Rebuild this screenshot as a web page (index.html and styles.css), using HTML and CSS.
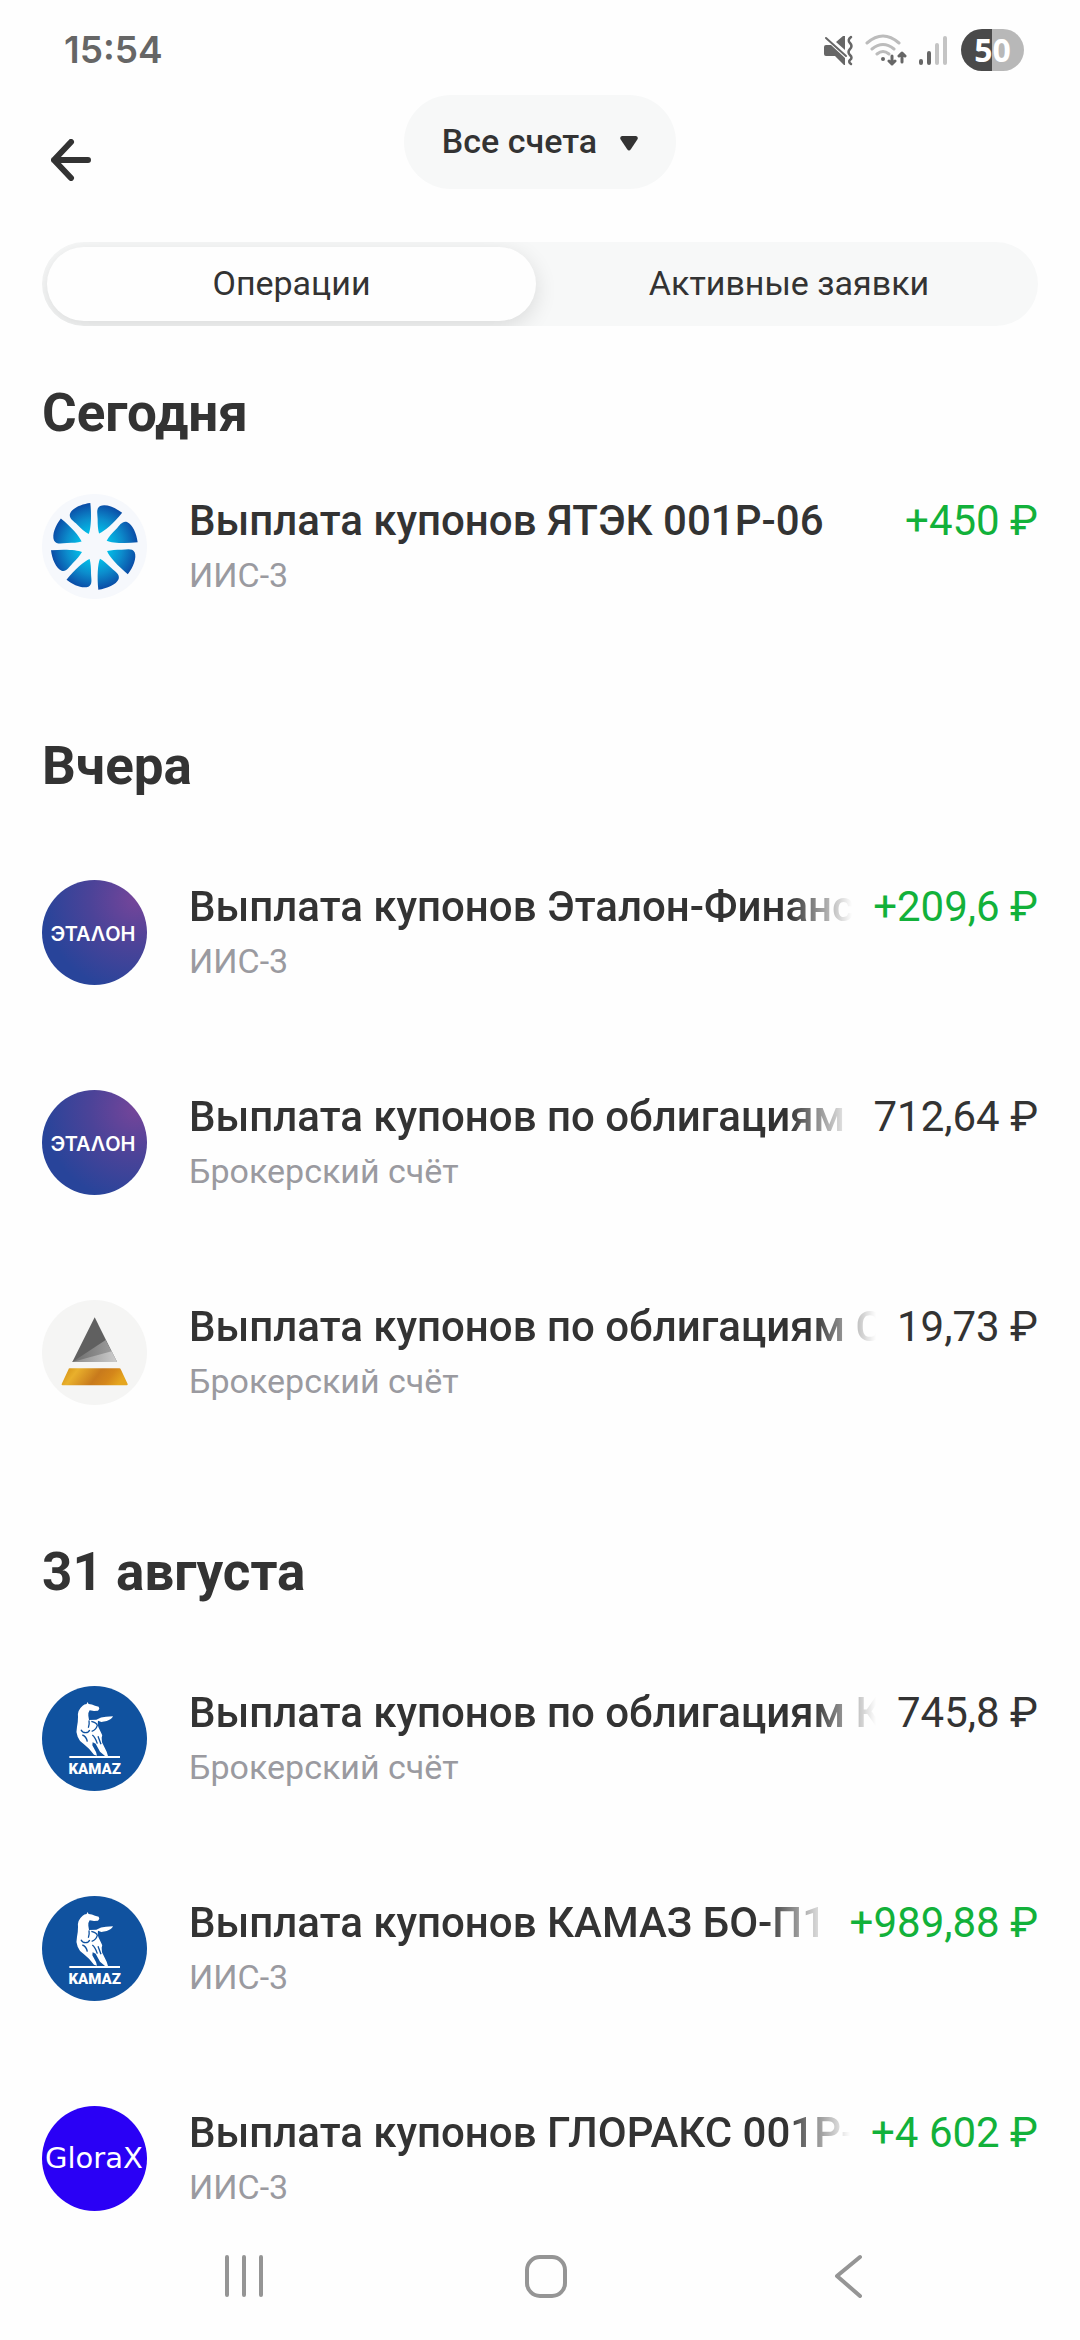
FILE: index.html
```html
<!DOCTYPE html>
<html lang="ru">
<head>
<meta charset="utf-8">
<meta name="viewport" content="width=device-width, initial-scale=1">
<title>Операции</title>
<link rel="stylesheet" href="styles.css">
</head>
<body>
<svg class="sprite" aria-hidden="true">
  <defs>
    <radialGradient id="blade" gradientUnits="userSpaceOnUse" cx="0" cy="0" r="130">
      <stop offset="0.3" stop-color="#00c2ea"/>
      <stop offset="0.65" stop-color="#0c8ccc"/>
      <stop offset="1" stop-color="#0a4ca6"/>
    </radialGradient>
    <radialGradient id="etalon-bg" cx="0.9" cy="0.18" r="0.9">
      <stop offset="0" stop-color="#75459a"/>
      <stop offset="0.5" stop-color="#4b4398"/>
      <stop offset="1" stop-color="#28449a"/>
    </radialGradient>
    <linearGradient id="gold" x1="0" y1="0" x2="1" y2="0.2">
      <stop offset="0" stop-color="#cf8a10"/>
      <stop offset="0.25" stop-color="#e9b02c"/>
      <stop offset="0.6" stop-color="#c87a1c"/>
      <stop offset="0.8" stop-color="#d4861a"/>
      <stop offset="1" stop-color="#e5a51e"/>
    </linearGradient>
    <linearGradient id="facet" x1="0" y1="0" x2="1" y2="0">
      <stop offset="0" stop-color="#6c6c6c"/>
      <stop offset="1" stop-color="#a2a2a2"/>
    </linearGradient>
    <linearGradient id="facet-light" x1="0" y1="0" x2="1" y2="0">
      <stop offset="0" stop-color="#8a8a8a"/>
      <stop offset="1" stop-color="#cccccc"/>
    </linearGradient>
    <path id="petal" d="M-12-130C-38-127-66-115-73-98C-77-84-64-77-51-65C-38-52-29-44-17-37C-10-52-8-92-12-130Z"/>
    <g id="horse">
      <path fill="#fff" d="M158 92q5-5 12-5l2-6 4 6q10 0 19 5l11 3 2 6-4 6-12 1-13-2q-5 7-4 16l2 13 22-1q14-9 29-9l21-1q-4 9-19 14l-16 3-10-4q-2 8 1 19l9 19q5 5 1 13l1 14 14 28 4 13-8 1-16-14-13-24-9-4-1 9 11 20 3 11-9-3-15-18-16-14q-13-8-18-22-6-16-2-30 3-14 3-29-3-20 14-34z"/>
      <path fill="none" stroke="#10529f" stroke-width="4" d="M177 136q2 12-2 22M184 139q16 4 18 12-4 14-17 18M153 164q4 9 14 9 9 0 12-8M157 180q12 4 15 20M187 180q9 7 15 26M204 184l9 24"/>
      <path stroke="#fff" stroke-width="6" d="M118 246h152"/>
    </g>
  </defs>
</svg>

<div class="screen">
  <div class="status">
    <time class="clock">15:54</time>
    <div class="indicators">
      <svg width="32" height="32" viewBox="820 34 32 32" role="img" aria-label="Вибрация">
        <g fill="#666"><path d="M825 45h5l14 13v7h-1l-9-9h-9q-2 0-2-2v-7q0-2 2-2zM835 42l7-6h2v14z"/></g>
        <path fill="none" stroke="#666" stroke-width="2" stroke-linecap="round" d="M825 38l20 18"/>
        <path fill="none" stroke="#666" stroke-width="2.500" stroke-linecap="round" stroke-linejoin="round" d="M850 37q-4 3-1 6 3 3 0 6-3 3 0 6 3 3 0 5-2 2 1 4"/>
      </svg>
      <svg width="42" height="32" viewBox="866 34 42 32" role="img" aria-label="Wi-Fi">
        <g fill="none" stroke="#bcbcbc" stroke-width="3" stroke-linecap="round"><path d="M868 43q16-14 32 0M873 49q11-9 22 0M878 54q6-5 12 0"/></g>
        <circle cx="884" cy="59" r="2" fill="#666"/>
        <path fill="none" stroke="#666" stroke-width="3" stroke-linecap="round" stroke-linejoin="round" d="M893 56v8m-3-3l3 3 3-3M903 62v-9m-3 3l3-3 3 3"/>
      </svg>
      <svg width="30" height="32" viewBox="917 34 30 32" role="img" aria-label="Сигнал сети">
        <g stroke-width="4" stroke-linecap="round"><path stroke="#666" d="M919 61v2M927 53v10"/><path stroke="#c4c4c4" d="M935 45v18M943 38v25"/></g>
      </svg>
      <div class="battery">50</div>
    </div>
  </div>

  <header class="topbar">
    <button class="back" type="button" aria-label="Назад">
      <svg width="40" height="42" viewBox="0 0 40 42"><path fill="none" stroke="#333" stroke-width="6" stroke-linecap="round" stroke-linejoin="round" d="M20 3L3 21l17 18M3 21h34"/></svg>
    </button>
    <button class="account" type="button">Все счета
      <svg class="caret" width="18" height="15" viewBox="0 0 18 15"><path fill="#333" d="M2 0h14q3 1 1 4l-6 9q-2 3-4 0L1 4q-2-3 1-4z"/></svg>
    </button>
  </header>

  <div class="tabs" role="tablist">
    <button class="tab tab-active" type="button" role="tab" aria-selected="true">Операции</button>
    <button class="tab" type="button" role="tab" aria-selected="false">Активные заявки</button>
  </div>

  <main class="feed">
    <section class="day day-first">
      <h2>Сегодня</h2>
      <ul>
        <li class="op">
          <svg class="logo" viewBox="36 42 315 315">
            <circle cx="193.500" cy="199.500" r="157.500" fill="#f6f8fc"/>
            <g transform="translate(193 199)" fill="url(#blade)">
              <use href="#petal"/>
              <use href="#petal" transform="rotate(45)"/>
              <use href="#petal" transform="rotate(90)"/>
              <use href="#petal" transform="rotate(135)"/>
              <use href="#petal" transform="rotate(180)"/>
              <use href="#petal" transform="rotate(225)"/>
              <use href="#petal" transform="rotate(270)"/>
              <use href="#petal" transform="rotate(315)"/>
            </g>
          </svg>
          <div class="info"><div class="title">Выплата купонов ЯТЭК 001P-06</div><div class="sub">ИИС-3</div></div>
          <div class="sum income">+450 ₽</div>
        </li>
      </ul>
    </section>
    <section class="day">
      <h2>Вчера</h2>
      <ul>
        <li class="op">
          <svg class="logo" viewBox="0 0 105 105">
            <circle cx="52.500" cy="52.500" r="52.500" fill="url(#etalon-bg)"/>
            <text class="etalon-word" x="51" y="61" text-anchor="middle">ЭТАΛОН</text>
          </svg>
          <div class="info"><div class="title fade">Выплата купонов Эталон-Финанс</div><div class="sub">ИИС-3</div></div>
          <div class="sum income">+209,6 ₽</div>
        </li>
        <li class="op">
          <svg class="logo" viewBox="0 0 105 105">
            <circle cx="52.500" cy="52.500" r="52.500" fill="url(#etalon-bg)"/>
            <text class="etalon-word" x="51" y="61" text-anchor="middle">ЭТАΛОН</text>
          </svg>
          <div class="info"><div class="title fade">Выплата купонов по облигациям</div><div class="sub">Брокерский счёт</div></div>
          <div class="sum">712,64 ₽</div>
        </li>
        <li class="op">
          <svg class="logo" viewBox="36 30 315 315">
            <circle cx="193.500" cy="187.500" r="157.500" fill="#f5f5f4"/>
            <path fill="#606060" d="M194 82l67 134H127z"/>
            <path fill="url(#facet)" d="M127 216l100-66 34 66z"/>
            <path fill="url(#facet-light)" d="M127 216l118-32 16 32z"/>
            <path fill="url(#gold)" d="M119 235h149q3 0 5 4l20 43q1 4-3 4H98q-4 0-3-4l20-43q1-4 4-4z"/>
          </svg>
          <div class="info"><div class="title fade">Выплата купонов по облигациям С</div><div class="sub">Брокерский счёт</div></div>
          <div class="sum">19,73 ₽</div>
        </li>
      </ul>
    </section>
    <section class="day">
      <h2>31 августа</h2>
      <ul>
        <li class="op">
          <svg class="logo" viewBox="36 33 315 315">
            <circle cx="193.500" cy="190.500" r="157.500" fill="#10529f"/>
            <use href="#horse"/>
            <text class="kamaz-word" x="194" y="298" text-anchor="middle">KAMAZ</text>
          </svg>
          <div class="info"><div class="title fade">Выплата купонов по облигациям К</div><div class="sub">Брокерский счёт</div></div>
          <div class="sum">745,8 ₽</div>
        </li>
        <li class="op">
          <svg class="logo" viewBox="36 33 315 315">
            <circle cx="193.500" cy="190.500" r="157.500" fill="#10529f"/>
            <use href="#horse"/>
            <text class="kamaz-word" x="194" y="298" text-anchor="middle">KAMAZ</text>
          </svg>
          <div class="info"><div class="title fade">Выплата купонов КАМАЗ БО-П1</div><div class="sub">ИИС-3</div></div>
          <div class="sum income">+989,88 ₽</div>
        </li>
        <li class="op">
          <svg class="logo" viewBox="0 0 105 105">
            <circle cx="52.500" cy="52.500" r="52.500" fill="#2a00f5"/>
            <text class="glorax-word" x="52" y="62" text-anchor="middle">GloraX</text>
          </svg>
          <div class="info"><div class="title fade">Выплата купонов ГЛОРАКС 001P-</div><div class="sub">ИИС-3</div></div>
          <div class="sum income">+4 602 ₽</div>
        </li>
      </ul>
    </section>
  </main>

  <nav class="sysnav">
    <button type="button" aria-label="Недавние">
      <svg width="44" height="44" viewBox="0 0 44 44"><path stroke="#959595" stroke-width="4" stroke-linecap="round" d="M5 3v38M22 3v38M39 3v38"/></svg>
    </button>
    <button type="button" aria-label="Домой">
      <svg width="44" height="44" viewBox="0 0 44 44"><rect x="3" y="3" width="38" height="39" rx="13" fill="none" stroke="#959595" stroke-width="4"/></svg>
    </button>
    <button type="button" aria-label="Назад">
      <svg width="44" height="44" viewBox="0 0 44 44"><path fill="none" stroke="#959595" stroke-width="4" stroke-linecap="round" stroke-linejoin="round" d="M34 3L11 22l23 20"/></svg>
    </button>
  </nav>
</div>
</body>
</html>
```
FILE: styles.css
```css
* {
  box-sizing: border-box;
}

body {
  margin: 0;
  background: #fefefe;
  color: #333;
  font-family: Roboto, "Noto Sans", sans-serif;
}

button {
  margin: 0;
  padding: 0;
  border: 0;
  background: none;
  color: inherit;
  font: inherit;
}

svg {
  display: block;
}

.sprite {
  position: absolute;
  width: 0;
  height: 0;
}

.screen {
  display: flex;
  flex-direction: column;
  min-height: 100vh;
}

.status {
  display: flex;
  justify-content: space-between;
  align-items: center;
  height: 95px;
  padding: 5px 56px 0 64px;
}

.clock {
  color: #666;
  font: 600 37px/48px Inter, sans-serif;
}

.indicators {
  display: flex;
  align-items: center;
  gap: 12px;
}

.battery {
  width: 63px;
  border-radius: 21px;
  background: linear-gradient(90deg, #4a4a4a 50%, #b8b8b8 50%);
  color: #fff;
  font: 700 32px/42px "Open Sans", sans-serif;
  text-align: center;
}

.topbar {
  display: grid;
  grid-template-columns: 1fr auto 1fr;
  height: 130px;
  padding: 0 42px;
}

.back {
  display: flex;
  align-self: center;
  justify-self: start;
  padding: 9px;
}

.account {
  display: flex;
  align-items: center;
  align-self: start;
  gap: 23px;
  height: 94px;
  padding: 0 38px 2px;
  border-radius: 47px;
  background: #f7f8f8;
  font-weight: 500;
  font-size: 34px;
}

.caret {
  margin-top: 4px;
}

.tabs {
  display: grid;
  grid-template-columns: 1fr 1fr;
  height: 84px;
  margin: 17px 42px 0;
  border-radius: 42px;
  background: #f7f8f8;
  overflow: hidden;
}

.tab {
  padding-bottom: 2px;
  font-size: 34px;
}

.tab-active {
  margin: 5px 4px 5px 5px;
  border-radius: 37px;
  background: #fefefe;
  box-shadow: 0 6px 22px rgba(0, 0, 0, 0.12);
}

.feed {
  padding: 57px 42px 0;
}

.day + .day {
  margin-top: 137px;
}

.day h2 {
  margin: 0 0 84px;
  font-weight: 700;
  font-size: 53px;
  line-height: 60px;
}

.day-first h2 {
  margin-bottom: 51px;
}

.day ul {
  display: flex;
  flex-direction: column;
  gap: 105px;
  margin: 0;
  padding: 0;
  list-style: none;
}

.op {
  display: flex;
  align-items: flex-start;
}

.logo {
  flex: none;
  width: 105px;
  height: 105px;
  margin-right: 42px;
}

.info {
  flex: 1;
  min-width: 0;
  padding-top: 2px;
}

.title,
.sum {
  font-size: 42px;
  line-height: 50px;
  white-space: nowrap;
}

.title {
  overflow: hidden;
  font-weight: 500;
}

.fade {
  -webkit-mask-image: linear-gradient(to left, transparent, #000 63px);
  mask-image: linear-gradient(to left, transparent, #000 63px);
}

.sub {
  margin-top: 9px;
  color: #9a9aa0;
  font-size: 34px;
  line-height: 40px;
}

.sum {
  padding: 2px 0 0 21px;
}

.income {
  color: #12b13a;
}

.sysnav {
  display: flex;
  justify-content: center;
  align-items: center;
  gap: 258px;
  height: 126px;
  margin-top: auto;
  padding: 0 0 2px 12px;
}

.etalon-word {
  fill: #fff;
  font: 600 20px Inter, sans-serif;
}

.kamaz-word {
  fill: #fff;
  font: 900 45px Roboto, sans-serif;
}

.glorax-word {
  fill: #fff;
  font: 400 29px "DejaVu Sans", sans-serif;
}
```
